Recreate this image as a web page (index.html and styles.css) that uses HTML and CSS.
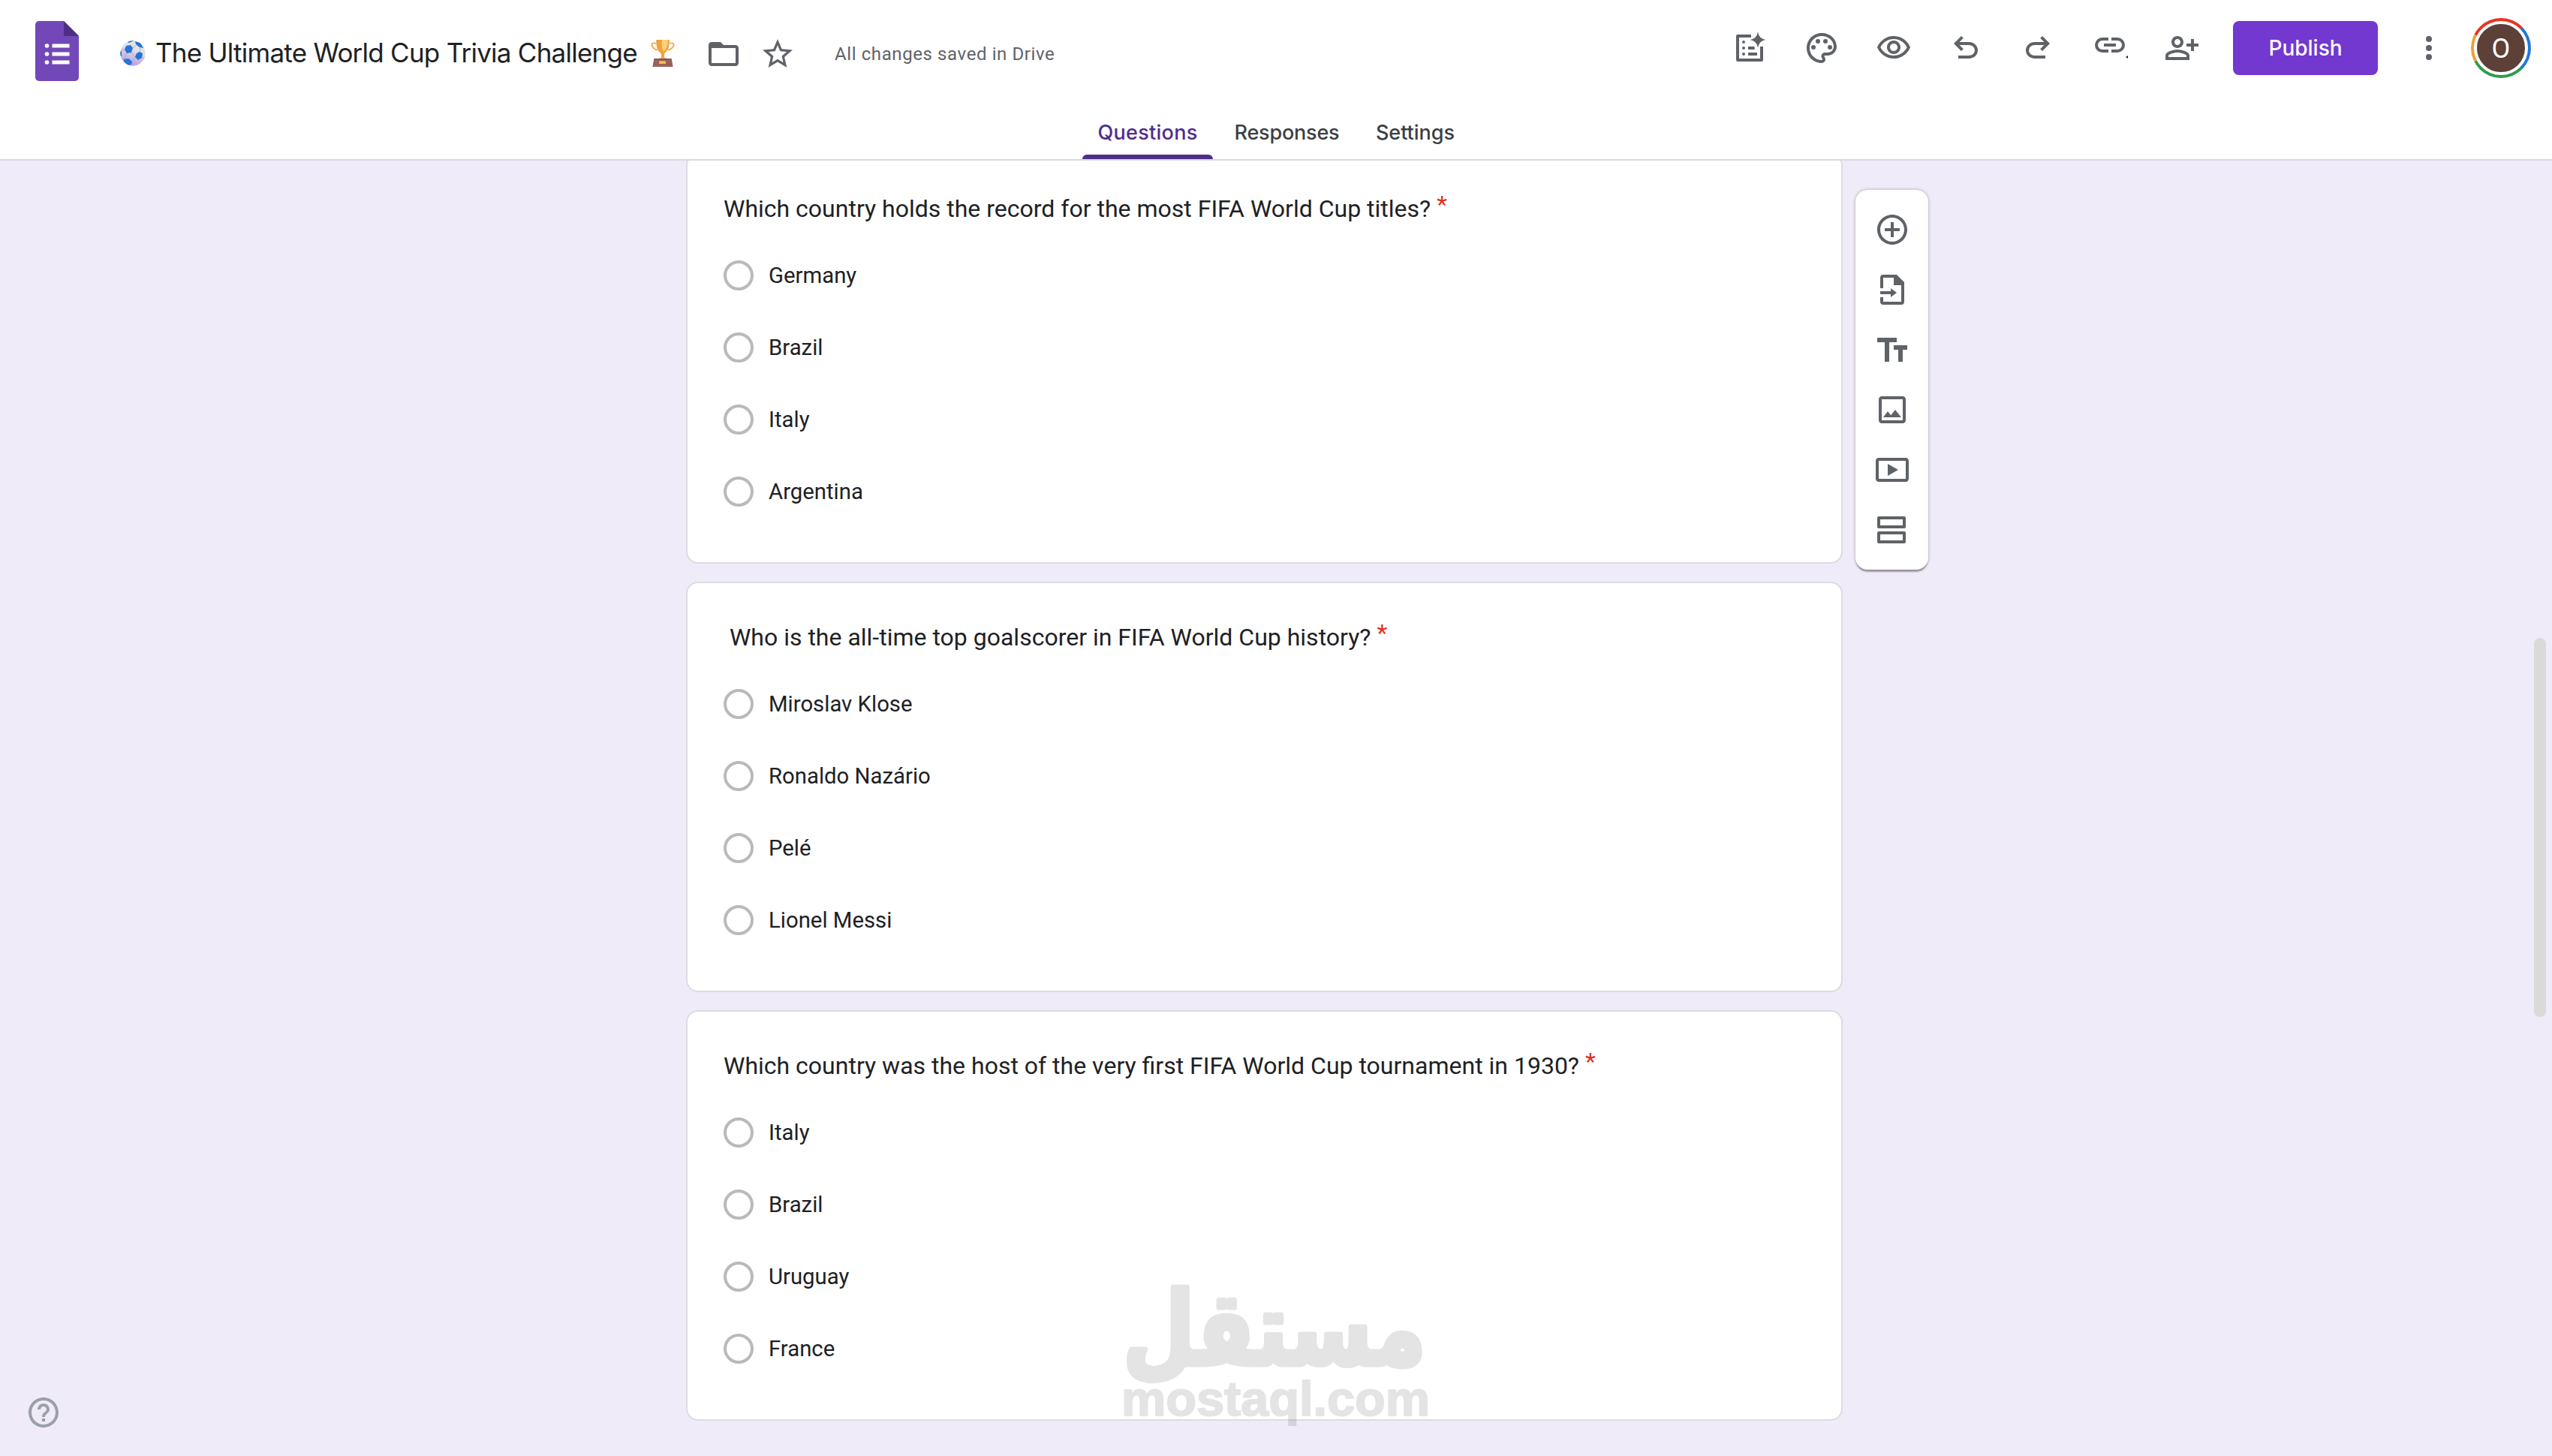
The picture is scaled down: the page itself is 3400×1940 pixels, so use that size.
FILE: index.html
```html
<!DOCTYPE html>
<html lang="en">
  <head>
    <meta charset="UTF-8" />
    <meta name="viewport" content="width=device-width, initial-scale=1.0" />
    <title>The Ultimate World Cup Trivia Challenge</title>
    <link rel="stylesheet" href="styles.css">
  </head>
  <body>
    <header class="header">
      <div class="topbar">
        <svg class="logo" viewBox="0 0 58 80">
          <path fill="#7248b9" d="M5 0h33l20 20v55a5 5 0 0 1-5 5H5a5 5 0 0 1-5-5V5a5 5 0 0 1 5-5z" />
          <path fill="#4f2f85" d="M38 0l20 20H38z" />
          <g fill="#fff">
            <circle cx="15.500" cy="33" r="2.800" />
            <circle cx="15.500" cy="44" r="2.800" />
            <circle cx="15.500" cy="55" r="2.800" />
            <path d="M22.500 30.500h23v5h-23zM22.500 41.500h23v5h-23zM22.500 52.500h23v5h-23z" />
          </g>
        </svg>
        <svg class="ball" viewBox="0 0 34 34">
          <defs>
            <linearGradient id="ballShade" x1="0.700" y1="0" x2="0.300" y2="1">
              <stop offset="0.350" stop-color="#e4e1e4" />
              <stop offset="1" stop-color="#a995e6" />
            </linearGradient>
            <clipPath id="ballClip"><circle cx="17" cy="17" r="16.700" /></clipPath>
          </defs>
          <g clip-path="url(#ballClip)">
            <circle cx="17" cy="17" r="17" fill="url(#ballShade)" />
            <g fill="#2474da">
              <path d="M8 7l6-1 3 4-2 6-6 1-3-5z" />
              <path d="M22 17l4-2 4 2-1 6-5 3-4-4z" />
              <path d="M20 1l7 2 4 7-5-1-5-4z" />
              <path d="M5 25l6-1 5 4-1 4-5 1-5-5z" />
              <path d="M0 14l2 1v5l-2 2zM10 2l4-3 5 1-7 3z" />
            </g>
            <g fill="none" stroke="#a9a4b8" stroke-width="0.800">
              <path d="M17 10l5-4M15 16l5 6M6 12l-5 2M9 17l-4 8M26 15l1-6M16 28l4-6M29 23l5 1" />
            </g>
          </g>
        </svg>
        <h1 class="title">The Ultimate World Cup Trivia Challenge</h1>
        <svg class="trophy" viewBox="0 0 32 38">
          <path fill="none" stroke="#f2a842" stroke-width="2" d="M7 6C0 4 0 9 3 12c2 2 4 3 6 3M25 6c7-2 7 3 4 6-2 2-4 3-6 3" />
          <path fill="#f0a33c" d="M7 1h18c0 9-1 14-6 18l-1 2v5h-4v-5l-1-2C8 15 7 10 7 1z" />
          <path fill="#fbd07c" d="M15 1h8c0 8-2 13-6 16-2-4-3-9-2-16z" />
          <path fill="#d98c35" d="M11 26h10v2H11z" />
          <path fill="#99605a" d="M4 27h24l2 11H2z" />
          <path fill="#74445a" d="M4 27h24v1H4z" />
          <path fill="#f9b55a" d="M11 30h9v4h-9z" />
        </svg>
        <svg class="icon folder" viewBox="0 0 24 24"><path d="M20 6h-8l-2-2H4c-1.100 0-2 .9-2 2v12c0 1.100.9 2 2 2h16c1.100 0 2-.9 2-2V8c0-1.100-.9-2-2-2zm0 12H4V8h16v10z" /></svg>
        <svg class="icon star" viewBox="0 0 24 24"><path d="M22 9.240l-7.190-.62L12 2 9.190 8.630 2 9.240l5.460 4.730L5.820 21 12 17.270 18.180 21l-1.630-7.030L22 9.240zM12 15.400l-3.760 2.270 1-4.280-3.320-2.880 4.380-.38L12 6.100l1.710 4.040 4.380.38-3.320 2.880 1 4.280L12 15.400z" /></svg>
        <span class="saved">All changes saved in Drive</span>

        <div class="actions">
          <svg class="icon" viewBox="0 0 24 24"><path d="M13 3v2H5v14h14v-8h2v9a1 1 0 0 1-1 1H4a1 1 0 0 1-1-1V4a1 1 0 0 1 1-1z" /><path d="M17.500 1.300q.7 4.500 5.200 5.200-4.500.7-5.200 5.200-.7-4.500-5.200-5.200 4.500-.7 5.200-5.200zM11 11h4.300v2H11zM11 15h6v2h-6z" /><circle cx="8" cy="8" r="1" /><circle cx="8" cy="12" r="1" /><circle cx="8" cy="16" r="1" /></svg>
          <svg class="icon" viewBox="0 0 24 24"><path d="M12 22C6.490 22 2 17.510 2 12S6.490 2 12 2s10 4.040 10 9c0 3.310-2.690 6-6 6h-1.770c-.28 0-.5.22-.5.5 0 .12.05.23.13.33.41.47.64 1.060.64 1.670A2.500 2.500 0 0 1 12 22zm0-18c-4.410 0-8 3.590-8 8s3.590 8 8 8c.28 0 .5-.22.5-.5a.54.54 0 0 0-.14-.35c-.41-.46-.63-1.050-.63-1.650a2.500 2.500 0 0 1 2.500-2.500H16c2.210 0 4-1.790 4-4 0-3.860-3.590-7-8-7z" /><circle cx="6.500" cy="11.500" r="1.500" /><circle cx="9.500" cy="7.500" r="1.500" /><circle cx="14.500" cy="7.500" r="1.500" /><circle cx="17.500" cy="11.500" r="1.500" /></svg>
          <svg class="icon" viewBox="0 0 24 24"><path d="M12 6c3.790 0 7.170 2.130 8.820 5.500C19.170 14.870 15.790 17 12 17s-7.170-2.130-8.820-5.500C4.830 8.130 8.210 6 12 6m0-2C7 4 2.730 7.110 1 11.500 2.730 15.890 7 19 12 19s9.270-3.110 11-7.500C21.270 7.110 17 4 12 4zm0 5c1.380 0 2.500 1.120 2.500 2.500S13.380 14 12 14s-2.500-1.120-2.500-2.500S10.620 9 12 9m0-2c-2.480 0-4.500 2.020-4.500 4.500S9.520 16 12 16s4.500-2.020 4.500-4.500S14.480 7 12 7z" /></svg>
          <svg class="icon" viewBox="0 0 24 24"><path d="M7 19v-2h7.100q1.575 0 2.738-1T18 13.500 16.838 11 14.100 10H7.800l2.600 2.600L9 14 4 9l5-5 1.400 1.400L7.800 8h6.300q2.425 0 4.163 1.575T20 13.500t-1.738 3.925T14.100 19z" /></svg>
          <svg class="icon" viewBox="0 0 24 24"><path transform="matrix(-1 0 0 1 24 0)" d="M7 19v-2h7.100q1.575 0 2.738-1T18 13.500 16.838 11 14.100 10H7.800l2.600 2.600L9 14 4 9l5-5 1.400 1.400L7.800 8h6.300q2.425 0 4.163 1.575T20 13.500t-1.738 3.925T14.100 19z" /></svg>
          <svg class="icon" viewBox="0 0 24 24"><path d="M11 15H7q-2.075 0-3.537-1.463Q2 12.075 2 10t1.463-3.537T7 5h4v2H7q-1.250 0-2.125.875T4 10t.875 2.125T7 13h4zm-3-4V9h8v2zm5 4v-2h4q1.250 0 2.125-.875T20 10t-.875-2.125T17 7h-4V5h4q2.075 0 3.538 1.463T22 10t-1.463 3.537T17 15z" /><path fill="#202124" d="M24 17v2l-1.500-1z" /></svg>
          <svg class="icon" viewBox="0 0 24 24"><path d="M9 12c2.210 0 4-1.790 4-4s-1.790-4-4-4-4 1.790-4 4 1.790 4 4 4zm0-6c1.100 0 2 .9 2 2s-.9 2-2 2-2-.9-2-2 .9-2 2-2zm0 7c-2.670 0-8 1.340-8 4v3h16v-3c0-2.660-5.330-4-8-4zm6 5H3v-.99C3.200 16.290 6.300 15 9 15s5.800 1.290 6 2v1zM18 6h2v3h3v2h-3v3h-2v-3h-3V9h3z" /></svg>
        </div>
        <button class="publish">Publish</button>
        <svg class="more" viewBox="0 0 12 24"><circle cx="6" cy="6" r="2" /><circle cx="6" cy="12" r="2" /><circle cx="6" cy="18" r="2" /></svg>
        <div class="avatar"><span class="avatar-inner">O</span></div>
      </div>
      <nav class="tabs">
        <a class="tab active">Questions</a>
        <a class="tab tab-responses">Responses</a>
        <a class="tab">Settings</a>
      </nav>
    </header>

    <main class="main">
      <div class="cards">
        <section class="card">
          <h2 class="question">Which country holds the record for the most FIFA World Cup titles?<span class="required">*</span></h2>
          <div class="option"><span class="radio"></span>Germany</div>
          <div class="option"><span class="radio"></span>Brazil</div>
          <div class="option"><span class="radio"></span>Italy</div>
          <div class="option"><span class="radio"></span>Argentina</div>
        </section>
        <section class="card">
          <h2 class="question">&nbsp;Who is the all-time top goalscorer in FIFA World Cup history?<span class="required">*</span></h2>
          <div class="option"><span class="radio"></span>Miroslav Klose</div>
          <div class="option"><span class="radio"></span>Ronaldo Nazário</div>
          <div class="option"><span class="radio"></span>Pelé</div>
          <div class="option"><span class="radio"></span>Lionel Messi</div>
        </section>
        <section class="card">
          <h2 class="question">Which country was the host of the very first FIFA World Cup tournament in 1930?<span class="required">*</span></h2>
          <div class="option"><span class="radio"></span>Italy</div>
          <div class="option"><span class="radio"></span>Brazil</div>
          <div class="option"><span class="radio"></span>Uruguay</div>
          <div class="option"><span class="radio"></span>France</div>
        </section>
      </div>

      <aside class="tools">
        <svg class="icon" viewBox="0 0 24 24"><path d="M13 7h-2v4H7v2h4v4h2v-4h4v-2h-4V7zm-1-5C6.480 2 2 6.480 2 12s4.480 10 10 10 10-4.480 10-10S17.520 2 12 2zm0 18c-4.410 0-8-3.590-8-8s3.590-8 8-8 8 3.590 8 8-3.590 8-8 8z" /></svg>
        <svg class="icon" viewBox="0 0 24 24"><path d="M4 11V4a2 2 0 0 1 2-2h9l5 5v13a2 2 0 0 1-2 2H6a2 2 0 0 1-2-2v-3h2v3h12V9h-5V4H6v7z" /><path d="M4 13h7v-2l4 3-4 3v-2H4z" /></svg>
        <svg class="icon" viewBox="0 0 24 24"><path d="M2 4h13v3h-5v13H7V7H2zM13 9h9v3h-3v8h-3v-8h-3z" /></svg>
        <svg class="icon" viewBox="0 0 24 24"><path d="M19 5v14H5V5h14m0-2H5c-1.100 0-2 .9-2 2v14c0 1.100.9 2 2 2h14c1.100 0 2-.9 2-2V5c0-1.100-.9-2-2-2z" /><path d="M6 17l3-4 2.100 2.600 2.900-3.600 4 5z" /></svg>
        <svg class="icon" viewBox="0 0 24 24"><path d="M21 4H3c-1.100 0-2 .9-2 2v12c0 1.100.9 2 2 2h18c1.100 0 2-.9 2-2V6c0-1.100-.9-2-2-2zm0 14H3V6h18z" /><path d="M9 8v8l7-4z" /></svg>
        <svg class="icon" viewBox="0 0 24 24"><path d="M3 3h17a1 1 0 0 1 1 1v6a1 1 0 0 1-1 1H3a1 1 0 0 1-1-1V4a1 1 0 0 1 1-1zm1 2v4h15V5zM3 13h17a1 1 0 0 1 1 1v6a1 1 0 0 1-1 1H3a1 1 0 0 1-1-1v-6a1 1 0 0 1 1-1zm1 2v4h15v-4z" /></svg>
      </aside>
    </main>

    <svg class="icon help" viewBox="0 0 24 24"><path d="M11 18h2v-2h-2v2zm1-16C6.480 2 2 6.480 2 12s4.480 10 10 10 10-4.480 10-10S17.520 2 12 2zm0 18c-4.410 0-8-3.590-8-8s3.590-8 8-8 8 3.590 8 8-3.590 8-8 8zm0-14c-2.210 0-4 1.790-4 4h2c0-1.100.9-2 2-2s2 .9 2 2c0 2-3 1.750-3 5h2c0-2.250 3-2.500 3-5 0-2.210-1.790-4-4-4z" /></svg>
    <div class="scrollbar"></div>

    <svg class="watermark" viewBox="0 0 420 210">
      <text class="mark-ar" x="6" y="116" textLength="404" lengthAdjust="spacingAndGlyphs">مستقل</text>
      <text class="mark-en" x="4" y="184" textLength="411" lengthAdjust="spacingAndGlyphs">mostaql.com</text>
    </svg>
  </body>
</html>
```

FILE: styles.css
```css
* {
  box-sizing: border-box;
}
body {
  margin: 0;
  width: 3400px;
  height: 1940px;
  overflow: hidden;
  position: relative;
  background: #f0ebf8;
  color: #202124;
  font-family: Roboto, Arial, sans-serif;
}
.icon {
  display: block;
  flex: none;
  width: 48px;
  height: 48px;
  fill: #5f6368;
}

/* header */
.header {
  position: relative;
  height: 214px;
  background: #fff;
  border-bottom: 2px solid #dadada;
}
.topbar {
  display: flex;
  align-items: flex-start;
  height: 142px;
  padding: 0 28px 0 47px;
}
.topbar > svg {
  flex: none;
}
.logo {
  width: 58px;
  height: 80px;
  margin-top: 28px;
}
.ball {
  width: 34px;
  height: 34px;
  margin: 54px 0 0 55px;
}
.title {
  flex: none;
  width: 660px;
  margin: 46px 0 0 13px;
  font: 400 35px/48px Inter, sans-serif;
  letter-spacing: -0.75px;
  white-space: nowrap;
}
.trophy {
  width: 32px;
  height: 37px;
  margin-top: 52px;
}
.folder {
  margin: 48px 24px 0 41px;
}
.star {
  margin-top: 48px;
}
.saved {
  margin: 54px 0 0 52px;
  font-size: 24px;
  line-height: 36px;
  letter-spacing: 0.6px;
  color: #5f6368;
  white-space: nowrap;
}
.actions {
  display: flex;
  gap: 48px;
  margin: 40px 44px 0 auto;
}
.publish {
  flex: none;
  width: 193px;
  height: 72px;
  margin-top: 28px;
  padding: 0;
  border: none;
  border-radius: 8px;
  background: #7338d0;
  color: #fff;
  font: 500 28px/72px Inter, sans-serif;
}
.more {
  width: 24px;
  height: 48px;
  margin: 40px 44px 0 56px;
  fill: #5f6368;
}
.avatar {
  flex: none;
  width: 80px;
  height: 80px;
  margin-top: 24px;
  padding: 4px;
  border-radius: 50%;
  background: conic-gradient(#ea3323 45deg, #1f77e0 45deg 135deg, #2a9d48 135deg 243deg, #eda13a 243deg 297deg, #ea3323 297deg);
}
.avatar-inner {
  display: block;
  height: 72px;
  border: 4px solid #fff;
  border-radius: 50%;
  background: #5d4037;
  color: #fff;
  font-size: 36px;
  line-height: 66px;
  text-align: center;
}
.tabs {
  display: flex;
  gap: 8px;
  height: 70px;
  padding-left: 1442px;
}
.tab {
  display: flex;
  flex-direction: column;
  justify-content: space-between;
  width: 145px;
  padding-top: 17px;
  font: 500 27px/36px Inter, sans-serif;
  text-align: center;
  color: #3c4043;
}
.tab-responses {
  width: 181px;
  letter-spacing: -0.2px;
}
.tab.active {
  width: 174px;
  letter-spacing: 0.3px;
  color: #4f2d8c;
}
.tab.active::after {
  content: "";
  height: 6px;
  border-radius: 6px 6px 0 0;
  background: #4f2d8c;
}

/* question cards */
.main {
  display: flex;
  align-items: flex-start;
  height: 1726px;
  padding-left: 914px;
  overflow: hidden;
}
.cards {
  display: flex;
  flex-direction: column;
  gap: 24px;
  margin-top: -10px;
}
.card {
  width: 1541px;
  height: 547px;
  padding: 48px 48px 0;
  border: 2px solid #dadce0;
  border-radius: 16px;
  background: #fff;
}
.question {
  margin: 0 0 17px;
  font-size: 32px;
  font-weight: 400;
  line-height: 48px;
  white-space: pre;
}
.required {
  margin-left: 8px;
  color: #e0301e;
  position: relative;
  top: -6px;
}
.option {
  display: flex;
  align-items: center;
  gap: 20px;
  height: 96px;
  font-size: 29.33px;
}
.radio {
  width: 40px;
  height: 40px;
  border: 4px solid #bababc;
  border-radius: 50%;
}

/* floating toolbar */
.tools {
  display: flex;
  flex-direction: column;
  align-items: center;
  gap: 32px;
  width: 97px;
  margin: 39px 0 0 17px;
  padding: 29px 0;
  border-radius: 16px;
  background: #fff;
  box-shadow: 0 4px 2px -1px rgba(0, 0, 0, 0.3), 0 0 4px rgba(0, 0, 0, 0.3);
}

.help {
  position: absolute;
  left: 34px;
  bottom: 34px;
  fill: #9aa0a6;
}
.scrollbar {
  position: absolute;
  top: 850px;
  right: 8px;
  width: 16px;
  height: 505px;
  border-radius: 8px;
  background: #dadada;
}

/* watermark over the last card */
.watermark {
  position: absolute;
  left: 1490px;
  top: 1702px;
  width: 420px;
  height: 210px;
  overflow: visible;
  opacity: 0.1;
  stroke: #000;
  stroke-linejoin: round;
}
.mark-ar {
  font: 700 135px "DejaVu Sans", sans-serif;
  stroke-width: 7px;
}
.mark-en {
  font: 700 65px "Liberation Sans", Arial, sans-serif;
  stroke-width: 2px;
}
```
